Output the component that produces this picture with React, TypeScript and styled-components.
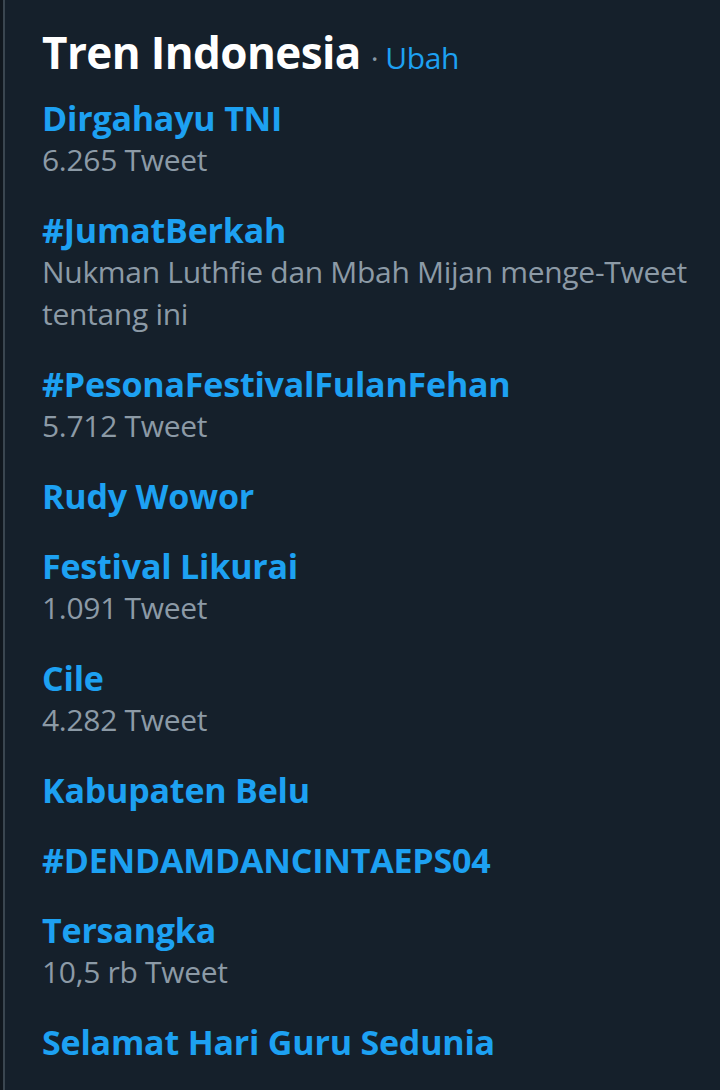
import React from "react";
import styled, { createGlobalStyle } from "styled-components";

const Global = createGlobalStyle`
  html, body { margin: 0; padding: 0; background: #15202b; }
  body { font-family: "Open Sans", "Noto Sans", sans-serif; }
`;

const Page = styled.div`
  display: flex;
  min-height: 1090px;
  background: #15202b;
`;

const Edge = styled.div`
  width: 3px;
  background: #10171e;
  border-right: 2px solid #3a4650;
`;

const Panel = styled.section`
  flex: 1;
  padding: 22px 0 0 37px;
`;

const Header = styled.div`
  display: flex;
  align-items: baseline;
  gap: 10px;
  margin-bottom: 15px;
`;

const Title = styled.h2`
  margin: 0;
  font-size: 44px;
  line-height: 60px;
  font-weight: 700;
  color: #ffffff;
  letter-spacing: -0.6px;
`;

const Change = styled.span`
  font-size: 30px;
  color: #1da1f2;
  letter-spacing: -0.4px;
  &::before {
    content: "·";
    color: #8899a6;
    margin-right: 7px;
  }
`;

const List = styled.ul`
  list-style: none;
  margin: 0;
  padding: 0;
  display: flex;
  flex-direction: column;
  gap: 28px;
`;

const Item = styled.li`
  display: flex;
  flex-direction: column;
`;

const Name = styled.span`
  font-size: 34px;
  line-height: 42px;
  font-weight: 700;
  color: #1da1f2;
  letter-spacing: -0.2px;
`;

const Meta = styled.span`
  font-size: 30px;
  line-height: 42px;
  color: #8c9aa6;
  letter-spacing: -0.3px;
  max-width: 670px;
`;

const trends: { name: string; meta?: string }[] = [
  { name: "Dirgahayu TNI", meta: "6.265 Tweet" },
  { name: "#JumatBerkah", meta: "Nukman Luthfie dan Mbah Mijan menge-Tweet tentang ini" },
  { name: "#PesonaFestivalFulanFehan", meta: "5.712 Tweet" },
  { name: "Rudy Wowor" },
  { name: "Festival Likurai", meta: "1.091 Tweet" },
  { name: "Cile", meta: "4.282 Tweet" },
  { name: "Kabupaten Belu" },
  { name: "#DENDAMDANCINTAEPS04" },
  { name: "Tersangka", meta: "10,5 rb Tweet" },
  { name: "Selamat Hari Guru Sedunia" },
];

export default function App() {
  return (
    <Page>
      <Global />
      <Edge />
      <Panel>
        <Header>
          <Title>Tren Indonesia</Title>
          <Change>Ubah</Change>
        </Header>
        <List>
          {trends.map((t) => (
            <Item key={t.name}>
              <Name>{t.name}</Name>
              {t.meta && <Meta>{t.meta}</Meta>}
            </Item>
          ))}
        </List>
      </Panel>
    </Page>
  );
}
